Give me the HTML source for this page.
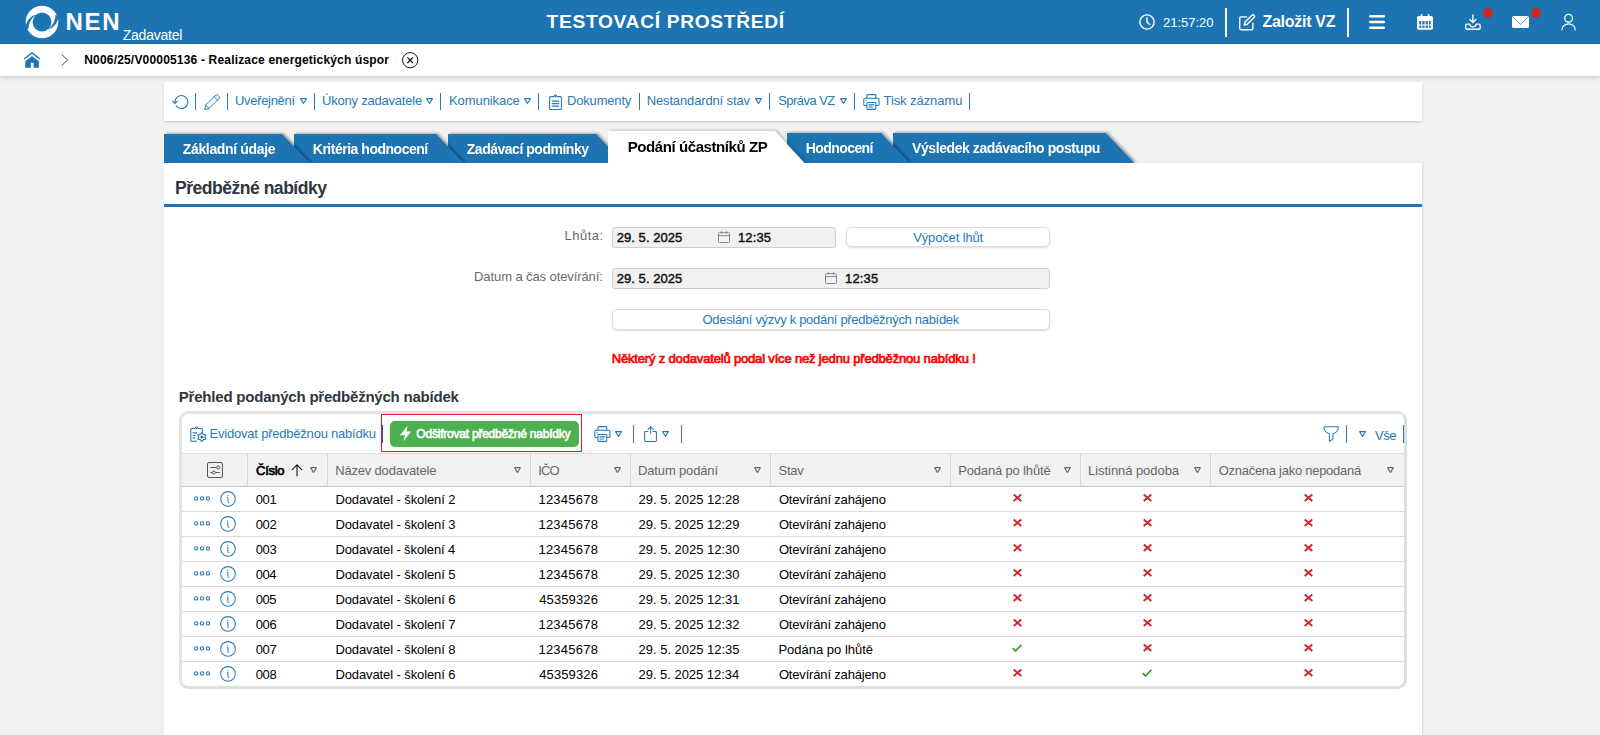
<!DOCTYPE html>
<html lang="cs">
<head>
<meta charset="utf-8">
<title>NEN - Zadavatel - Předběžné nabídky</title>
<style>
*{box-sizing:border-box;margin:0;padding:0}
html,body{width:1600px;height:735px;overflow:hidden}
body{position:relative;background:#f1f1f1;font-family:"Liberation Sans",sans-serif;font-size:13px;color:#000;line-height:1}
.t{position:absolute;white-space:nowrap;line-height:1}
svg{position:absolute;overflow:visible}

/* top bar */
#top{position:absolute;left:0;top:0;width:1600px;height:44px;background:#1c74b3;color:#fff}
#top .vsep{position:absolute;top:8px;width:2px;height:29px;background:#fff}
#top .dot{position:absolute;width:10px;height:10px;border-radius:50%;background:#c8282c}

/* breadcrumb */
#crumbs{position:absolute;left:0;top:44px;width:1600px;height:32px;background:#fff;box-shadow:0 1px 5px rgba(0,0,0,.20)}

/* main toolbar */
#toolbar{position:absolute;left:164px;top:82px;width:1258px;height:39px;background:#fff;box-shadow:0 1px 2px rgba(0,0,0,.16);color:#2779b8}
.sep{position:absolute;width:1px;background:#2779b8}
#toolbar .sep{top:11px;height:17px}

/* tabs */
#tabs{position:absolute;left:0;top:0;width:1600px;height:163px;overflow:hidden}
.tabw.on{filter:drop-shadow(2px -.5px 1.500px rgba(0,0,0,.18))}
.tabw{position:absolute;filter:drop-shadow(2px -1px 1.200px rgba(0,0,0,.30))}
.tab{position:absolute;left:0;top:0;width:100%;height:100%;background:#1c74b3;color:#fff;font-weight:bold}
.tab.on{background:#fff;color:#000}

/* panel */
#panel{position:absolute;left:164px;top:163px;width:1258px;height:572px;background:#fff;box-shadow:1px 0 2px rgba(0,0,0,.10)}
#panel h1,#panel h2{font-weight:bold;color:#2e3641}
.rule{position:absolute;left:0;top:41px;width:100%;height:3px;background:#1c74b3}
.lbl{color:#6a6a6a}
.inp{position:absolute;background:#f1f1f1;border:1px solid #cfcfcf;border-radius:3px}
.inp .t{font-weight:normal;color:#111;-webkit-text-stroke:.45px #111}
.btn{position:absolute;background:#fff;border:1px solid #dcdcdc;border-radius:5px;box-shadow:0 1px 2px rgba(0,0,0,.14);color:#2779b8}
.warn{color:#f00;font-weight:normal;-webkit-text-stroke:.7px #f00}

/* grid */
#grid{position:absolute;left:15px;top:248px;width:1228px;height:278px;border:3px solid #dcdfe0;border-top-color:#e2e4e5;border-left-color:#e2e4e5;border-radius:9px;background:#fff;overflow:hidden}
#gtool{position:absolute;left:0;top:0;width:1222px;height:39px;color:#2779b8}
#gtool .sep{top:11px;height:18px}
#redbox{position:absolute;left:199px;top:0;width:201px;height:38px;border:1px solid #e81a22}
#gbtn{position:absolute;left:208px;top:7px;width:189px;height:26px;border-radius:5px;background:#4caf50;color:#fff;-webkit-text-stroke:.62px #fff}
#ghead{position:absolute;left:0;top:39px;width:1222px;height:33.5px;background:#f1f1f1;border-top:1px solid #dcdcdc;border-bottom:1px solid #c9c9c9;color:#666}
#ghead .cs{position:absolute;top:0;width:1px;height:32px;background:#d6d6d6}
.row{position:absolute;left:0;width:1222px;height:25px;border-bottom:1px solid #dcdcdc}

</style>
</head>
<body>

<!-- ================= TOP BAR ================= -->
<header id="top">
  <svg style="left:25px;top:5px" width="34" height="34" viewBox="-17 -17 34 34">
    <circle cx="0" cy="0" r="16.3" fill="#fff"/>
    <circle cx="0" cy="0" r="9.4" fill="#1c74b3"/>
    <path d="M-16.6,5.6 C-15.5,-1.5 -11.5,-5.5 -6.3,-7.4 C-10.6,-3.6 -13.2,0.6 -13.6,7.2 Z" fill="#1c74b3"/>
    <path d="M16.6,-5.6 C15.5,1.5 11.5,5.5 6.3,7.4 C10.6,3.6 13.2,-0.6 13.6,-7.2 Z" fill="#1c74b3"/>
  </svg>
  <span class="t" id="nen" style="top:9.68px;font-size:24px;left:65.5px;letter-spacing:1.664px;font-weight:bold;">NEN</span>
  <span class="t" id="zad" style="top:27.95px;font-size:14px;left:122.75px;letter-spacing:-0.235px;">Zadavatel</span>
  <span class="t" id="env" style="top:12.45px;font-size:19.2px;left:546.6px;letter-spacing:0.672px;font-weight:bold;">TESTOVACÍ PROSTŘEDÍ</span>
  <svg style="left:1139px;top:14px" width="16" height="16" viewBox="0 0 16 16" fill="none" stroke="#fff" stroke-width="1.4" stroke-linecap="round">
    <circle cx="8" cy="8" r="7.1"/><path d="M8 3.8V8l2.6 2.6"/>
  </svg>
  <span class="t" id="clk" style="top:16.0px;font-size:13px;left:1163.0px;letter-spacing:-0.016px;">21:57:20</span>
  <div class="vsep" style="left:1225px"></div>
  <svg style="left:1239px;top:14px" width="17" height="16.500" viewBox="0 0 17 16.500" fill="none" stroke="#fff" stroke-width="1.400" stroke-linejoin="round" stroke-linecap="round">
    <path d="M7.600 2.900H2.100a1.400 1.400 0 0 0-1.400 1.400v10a1.400 1.400 0 0 0 1.400 1.400h10.400a1.400 1.400 0 0 0 1.400-1.400V9.200"/>
    <path d="M12.900 1.200a1.550 1.550 0 0 1 2.200 2.200L8.200 10.300l-2.900.7.700-2.900z"/>
  </svg>
  <span class="t" id="zal" style="top:14.46px;font-size:16px;left:1262.5px;letter-spacing:-0.285px;font-weight:bold;">Založit VZ</span>
  <div class="vsep" style="left:1347px"></div>
  <svg style="left:1369px;top:14px" width="16" height="16" viewBox="0 0 16 16" fill="none" stroke="#fff" stroke-width="2.4" stroke-linecap="round">
    <path d="M1.2 2.2h13.6M1.2 8h13.6M1.2 13.8h13.6"/>
  </svg>
  <svg style="left:1416.800px;top:14.200px" width="16" height="16" viewBox="0 0 16 16">
    <rect x="3.700" y="0" width="1.700" height="3.500" rx=".5" fill="#fff"/><rect x="10.700" y="0" width="1.700" height="3.500" rx=".5" fill="#fff"/>
    <rect x="0" y="1.900" width="16" height="13.800" rx="1.600" fill="#fff"/>
    <g fill="#1c74b3">
      <rect x="2.300" y="7" width="2" height="3.500"/><rect x="5.400" y="7" width="2.200" height="3.500"/><rect x="8.700" y="7" width="2.200" height="3.500"/><rect x="12" y="7" width="1.800" height="3.500"/>
      <rect x="2.300" y="11.600" width="2" height="2.300"/><rect x="5.400" y="11.600" width="2.200" height="2.300"/><rect x="8.700" y="11.600" width="2.200" height="2.300"/><rect x="12" y="11.600" width="1.800" height="2.300"/>
    </g>
  </svg>
  <svg style="left:1465px;top:13px" width="16" height="17" viewBox="0 0 16 17" fill="none" stroke="#fff" stroke-width="1.350" stroke-linecap="round" stroke-linejoin="round">
    <path d="M7.900 1.800v7.400M4.900 6.500l3 3 3-3"/>
    <path d="M1.700 11.100h2.900c.5 1.900 1.800 2.700 3.300 2.700s2.800-.8 3.300-2.700h2.900a1 1 0 0 1 1 1v3.100a1 1 0 0 1-1 1H1.700a1 1 0 0 1-1-1v-3.100a1 1 0 0 1 1-1z"/>
  </svg>
  <div class="dot" style="left:1483px;top:8px"></div>
  <svg style="left:1512px;top:16px" width="17" height="12" viewBox="0 0 17 12">
    <rect x="0" y="0" width="17" height="12" rx="1.500" fill="#fff"/>
    <path d="M.8 .8L8.500 8.400 16.200 .8" fill="none" stroke="#1c74b3" stroke-width=".75"/>
  </svg>
  <div class="dot" style="left:1531px;top:8px"></div>
  <svg style="left:1561px;top:13px" width="16" height="18" viewBox="0 0 16 18" fill="none" stroke="#fff" stroke-width="1.300" stroke-linecap="butt">
    <circle cx="7.600" cy="5.200" r="3.850"/><path d="M.9 17.200v-.2a6.700 6.200 0 0 1 13.400 0v.2"/>
  </svg>
</header>

<!-- ================= BREADCRUMB ================= -->
<nav id="crumbs">
  <svg style="left:24px;top:8px" width="16" height="16" viewBox="0 0 16 16">
    <path d="M.8 6.500L8 .9l7.200 5.600" stroke="#1f76b6" stroke-width="1.500" fill="none" stroke-linecap="round" stroke-linejoin="miter"/>
    <path d="M1.250 9.300L8 3.900l6.900 5.400v6.500H9.600v-5H6.900v5H1.250z" fill="#1f76b6"/>
  </svg>
  <svg style="left:61px;top:10px" width="8" height="12" viewBox="0 0 8 12" fill="none" stroke="#3d4f66" stroke-width="1"><path d="M.7 .5l6 5.500-6 5.500"/></svg>
  <span class="t" id="bc" style="top:9.64px;font-size:12px;left:84.25px;letter-spacing:0.179px;font-weight:bold;">N006/25/V00005136 - Realizace energetických úspor</span>
  <svg style="left:401.800px;top:7.800px" width="16.400" height="16.400" viewBox="0 0 16.400 16.400" fill="none" stroke="#111" stroke-width="1" stroke-linecap="butt">
    <circle cx="8.200" cy="8.200" r="7.650"/><path d="M5.400 5.400l5.600 5.600M11 5.400l-5.600 5.600" stroke-width="1.250"/>
  </svg>
</nav>


<!-- ================= MAIN TOOLBAR ================= -->
<div id="toolbar">
  <svg style="left:8px;top:12px" width="17" height="16" viewBox="0 0 17 16" fill="none" stroke="#2779b8" stroke-width="1.050" stroke-linecap="round" stroke-linejoin="round">
    <path d="M3.050 9.100A6.500 6.500 0 1 1 4.100 11.700"/><path d="M.7 7.100l2.350 2.300 2.300-2.200"/>
  </svg>
  <div class="sep" style="left:31px"></div>
  <svg style="left:40px;top:11.600px" width="16.200" height="16.200" viewBox="0 0 17 17" fill="none" stroke="#2779b8" stroke-width="1.05" stroke-linecap="round" stroke-linejoin="round">
    <path d="M12 1.4a1.9 1.9 0 0 1 2.7 0l.9.9a1.9 1.9 0 0 1 0 2.7L5.4 15.2l-4.6 1 1-4.6z"/><path d="M10.6 2.8l3.6 3.6M1.8 11.6l3.6 3.6"/>
  </svg>
  <div class="sep" style="left:63px"></div>
  <span class="t" id="tb1" style="top:12.0px;font-size:13px;left:71.0px;letter-spacing:-0.319px;">Uveřejnění</span><svg style="left:135.5px;top:16px" width="7" height="6.2" viewBox="0 0 7 6.2" fill="none" stroke="#2779b8" stroke-width="1.1" stroke-linejoin="round"><path d="M.6 .6h5.8L3.5 5.5z"/></svg>
  <div class="sep" style="left:150px"></div>
  <span class="t" id="tb2" style="top:12.0px;font-size:13px;left:158.0px;letter-spacing:-0.213px;">Úkony zadavatele</span><svg style="left:262px;top:16px" width="7" height="6.2" viewBox="0 0 7 6.2" fill="none" stroke="#2779b8" stroke-width="1.1" stroke-linejoin="round"><path d="M.6 .6h5.8L3.5 5.5z"/></svg>
  <div class="sep" style="left:276px"></div>
  <span class="t" id="tb3" style="top:12.0px;font-size:13px;left:285.0px;letter-spacing:-0.077px;">Komunikace</span><svg style="left:360.3px;top:16px" width="7" height="6.2" viewBox="0 0 7 6.2" fill="none" stroke="#2779b8" stroke-width="1.1" stroke-linejoin="round"><path d="M.6 .6h5.8L3.5 5.5z"/></svg>
  <div class="sep" style="left:374px"></div>
  <svg style="left:385px;top:12px" width="13" height="16" viewBox="0 0 13 16" fill="none" stroke="#2779b8" stroke-width="1.05" stroke-linejoin="round" stroke-linecap="round">
    <path d="M3.800 2.600H1.600a1 1 0 0 0-1 1v10.800a1 1 0 0 0 1 1h9.800a1 1 0 0 0 1-1V3.600a1 1 0 0 0-1-1H9.200"/>
    <path d="M3.800 2.600h1.100Q6.500 -.9 8.100 2.600h1.100"/>
    <circle cx="6.500" cy="2.600" r=".35" fill="#2779b8"/>
    <path d="M3.300 7.200h6.400M3.300 9.700h6.400M3.300 12.200h6.400" stroke-width="1.2"/>
  </svg>
  <span class="t" id="tb4" style="top:12.0px;font-size:13px;left:403.0px;letter-spacing:-0.176px;">Dokumenty</span>
  <div class="sep" style="left:475px"></div>
  <span class="t" id="tb5" style="top:12.0px;font-size:13px;left:482.7px;letter-spacing:-0.138px;">Nestandardní stav</span><svg style="left:590.8px;top:16px" width="7" height="6.2" viewBox="0 0 7 6.2" fill="none" stroke="#2779b8" stroke-width="1.1" stroke-linejoin="round"><path d="M.6 .6h5.8L3.5 5.5z"/></svg>
  <div class="sep" style="left:605px"></div>
  <span class="t" id="tb6" style="top:12.0px;font-size:13px;left:614.25px;letter-spacing:-0.552px;">Správa VZ</span><svg style="left:675.8px;top:16px" width="7" height="6.2" viewBox="0 0 7 6.2" fill="none" stroke="#2779b8" stroke-width="1.1" stroke-linejoin="round"><path d="M.6 .6h5.8L3.5 5.5z"/></svg>
  <div class="sep" style="left:690px"></div>
  <svg style="left:699.3px;top:12px" width="16.800" height="16" viewBox="0 0 16.800 16" fill="none" stroke="#2779b8" stroke-width="1.050" stroke-linejoin="round" stroke-linecap="round">
    <path d="M3.900 4.300V1.300a.7.700 0 0 1 .7-.7h7.500a.7.700 0 0 1 .7.700v3"/>
    <path d="M3.900 11.600H2a1.200 1.200 0 0 1-1.200-1.200V5.600A1.300 1.300 0 0 1 2.100 4.300h12.600a1.300 1.300 0 0 1 1.300 1.300v4.800a1.200 1.200 0 0 1-1.200 1.200h-1.900"/>
    <rect x="3.900" y="8.600" width="8.900" height="6.800" rx=".6" fill="#fff"/>
    <path d="M5.900 10.900h5M5.900 13h3.400M2.900 6.600h.3" stroke-width="1.050"/>
  </svg>
  <span class="t" id="tb7" style="top:12.0px;font-size:13px;left:719.5px;letter-spacing:-0.075px;">Tisk záznamu</span>
  <div class="sep" style="left:805px"></div>
</div>


<!-- ================= TABS ================= -->
<div id="tabs">
  <div class="tabw" style="left:164px;top:134px;width:146.0px;height:29px;z-index:6"><div class="tab" style="clip-path:polygon(0 0,118.0px 0,146.0px 29px,0 29px)"><span class="t" id="tab1" style="left:18.75px;top:8.05px;font-size:14px;letter-spacing:-0.346px;">Základní údaje</span></div></div>
  <div class="tabw" style="left:294px;top:134px;width:170.0px;height:29px;z-index:5"><div class="tab" style="clip-path:polygon(0 0,142.0px 0,170.0px 29px,0 29px)"><span class="t" id="tab2" style="left:18.75px;top:8.05px;font-size:14px;letter-spacing:-0.482px;">Kritéria hodnocení</span></div></div>
  <div class="tabw" style="left:448px;top:134px;width:176.0px;height:29px;z-index:4"><div class="tab" style="clip-path:polygon(0 0,148.0px 0,176.0px 29px,0 29px)"><span class="t" id="tab3" style="left:18.75px;top:8.05px;font-size:14px;letter-spacing:-0.481px;">Zadávací podmínky</span></div></div>
  <div class="tabw on" style="left:608px;top:131px;width:196.5px;height:32px;z-index:10"><div class="tab on" style="clip-path:polygon(0 0,167.0px 0,196.5px 32px,0 32px)"><span class="t" id="tab4" style="left:19.75px;top:8.2px;font-size:15px;letter-spacing:-0.418px;">Podání účastníků ZP</span></div></div>
  <div class="tabw" style="left:787px;top:133px;width:122.9px;height:30px;z-index:3"><div class="tab" style="clip-path:polygon(0 0,94.0px 0,122.9px 30px,0 30px)"><span class="t" id="tab5" style="left:18.75px;top:7.95px;font-size:14px;letter-spacing:-0.574px;">Hodnocení</span></div></div>
  <div class="tabw" style="left:893px;top:133px;width:241.49999999999991px;height:30px;z-index:2"><div class="tab" style="clip-path:polygon(0 0,212.5999999999999px 0,241.49999999999991px 30px,0 30px)"><span class="t" id="tab6" style="left:19.0px;top:7.95px;font-size:14px;letter-spacing:-0.416px;">Výsledek zadávacího postupu</span></div></div>
</div>

<section id="panel">

  <h1><span class="t" id="h1" style="top:17.3px;font-size:17.6px;left:11.0px;letter-spacing:-0.522px;">Předběžné nabídky</span></h1>
  <div class="rule"></div>

  <span class="t lbl" id="l1" style="top:66.0px;font-size:13px;right:818.25px;letter-spacing:0.519px;">Lhůta:</span>
  <div class="inp" style="left:448px;top:64px;width:224px;height:21px">
    <span class="t" id="d1" style="top:3.0px;font-size:13px;left:3.75px;letter-spacing:0.044px;">29. 5. 2025</span>
    <svg style="left:105px;top:2.8px" width="12" height="12" viewBox="0 0 12 12" fill="none" stroke="#8a8a8a" stroke-width="1"><rect x=".5" y="1.600" width="11" height="9.900" rx="1"/><path d="M.5 4.600h11M3.300 .2v2.600M8.700 .2v2.600"/></svg>
    <span class="t" id="c1" style="top:3.0px;font-size:13px;left:125.0px;letter-spacing:0.113px;">12:35</span>
  </div>
  <div class="btn" style="left:682px;top:64px;width:204px;height:20px">
    <span class="t" id="b1" style="top:3.0px;font-size:13px;left:66.2px;letter-spacing:-0.141px;">Výpočet lhůt</span>
  </div>

  <span class="t lbl" id="l2" style="top:107.0px;font-size:13px;right:819.25px;letter-spacing:-0.096px;">Datum a čas otevírání:</span>
  <div class="inp" style="left:448px;top:105px;width:438px;height:21px">
    <span class="t" id="d2" style="top:3.0px;font-size:13px;left:3.75px;letter-spacing:0.044px;">29. 5. 2025</span>
    <svg style="left:212px;top:2.8px" width="12" height="12" viewBox="0 0 12 12" fill="none" stroke="#8a8a8a" stroke-width="1"><rect x=".5" y="1.600" width="11" height="9.900" rx="1"/><path d="M.5 4.600h11M3.300 .2v2.600M8.700 .2v2.600"/></svg>
    <span class="t" id="c2" style="top:3.0px;font-size:13px;left:232.0px;letter-spacing:0.176px;">12:35</span>
  </div>

  <div class="btn" style="left:448px;top:146px;width:438px;height:20.500px">
    <span class="t" id="b2" style="top:3.3px;font-size:13px;left:89.5px;letter-spacing:-0.305px;">Odeslání výzvy k podání předběžných nabídek</span>
  </div>

  <span class="t warn" id="w1" style="top:189.3px;font-size:13px;left:447.75px;letter-spacing:-0.17px;">Některý z dodavatelů podal více než jednu předběžnou nabídku !</span>

  <h2><span class="t" id="h2" style="top:226.3px;font-size:15px;left:14.8px;letter-spacing:-0.212px;">Přehled podaných předběžných nabídek</span></h2>


  <div id="grid">
    <div id="gtool">
      <svg style="left:8px;top:12px" width="17" height="16" viewBox="0 0 17 16" fill="none" stroke="#2779b8" stroke-width="1.050" stroke-linecap="round" stroke-linejoin="round">
        <path d="M6.600 15.300H1.800a1 1 0 0 1-1-1V3.500a1 1 0 0 1 1-1h2.200M8.900 2.500h2.400a1 1 0 0 1 1 1v2.600"/>
        <path d="M4 2.500h.9Q6.500 -.9 8.100 2.500h.9"/>
        <circle cx="6.500" cy="2.500" r=".35" fill="#2779b8"/>
        <path d="M3.100 6.900h3.400M3.100 9.500h2.200M3.100 11.900h1.700" stroke-width="1.150"/>
        <path d="M11.85 6.45 L13.38 8.36 L15.79 8.73 L14.90 11.00 L15.79 13.27 L13.38 13.64 L11.85 15.55 L10.33 13.64 L7.91 13.27 L8.80 11.00 L7.91 8.72 L10.32 8.36z"/>
        <circle cx="11.85" cy="11.0" r="1.150" fill="#2779b8" stroke-width=".8"/>
      </svg>
      <span class="t" id="g1" style="top:13.0px;font-size:13px;left:27.6px;letter-spacing:-0.214px;">Evidovat předběžnou nabídku</span>
      <div class="sep" style="left:200px;background:#1d62a6"></div>
      <div id="redbox"></div>
      <div id="gbtn">
        <svg style="left:9.500px;top:5.400px" width="11.400" height="15" viewBox="0 0 11.400 15" fill="#fff"><path d="M7.500 0L0 9.200h5.100L3.700 15 11.200 5.400H6.500z"/></svg>
        <span class="t" id="g2" style="top:6.84px;font-size:12px;left:26.35px;letter-spacing:-0.221px;">Odšifrovat předběžné nabídky</span>
      </div>
      <svg style="left:412px;top:11.800px" width="16.800" height="16" viewBox="0 0 16.800 16" fill="none" stroke="#2779b8" stroke-width="1.050" stroke-linejoin="round" stroke-linecap="round">
    <path d="M3.900 4.300V1.300a.7.700 0 0 1 .7-.7h7.500a.7.700 0 0 1 .7.700v3"/>
    <path d="M3.900 11.600H2a1.200 1.200 0 0 1-1.200-1.200V5.600A1.300 1.300 0 0 1 2.100 4.300h12.600a1.300 1.300 0 0 1 1.300 1.300v4.800a1.200 1.200 0 0 1-1.200 1.200h-1.900"/>
    <rect x="3.900" y="8.600" width="8.900" height="6.800" rx=".6" fill="#fff"/>
    <path d="M5.900 10.900h5M5.900 13h3.400M2.900 6.600h.3" stroke-width="1.050"/>
  </svg>
      <svg style="left:433px;top:16.8px" width="7" height="6.2" viewBox="0 0 7 6.2" fill="none" stroke="#2779b8" stroke-width="1.1" stroke-linejoin="round"><path d="M.6 .6h5.8L3.5 5.5z"/></svg>
      <div class="sep" style="left:451px"></div>
      <svg style="left:462px;top:12.400px" width="13" height="16" viewBox="0 0 13 16" fill="none" stroke="#2779b8" stroke-width="1.050" stroke-linejoin="round" stroke-linecap="round">
        <path d="M4 5.400H1.400a.8.8 0 0 0-.8.8v8.400a.8.8 0 0 0 .8.8h10.200a.8.8 0 0 0 .8-.8V6.200a.8.8 0 0 0-.8-.8H9"/>
        <path d="M6.700 7.700V.8M4 3.400L6.700 .7l2.700 2.700"/>
      </svg>
      <svg style="left:480.4px;top:16.8px" width="7" height="6.2" viewBox="0 0 7 6.2" fill="none" stroke="#2779b8" stroke-width="1.1" stroke-linejoin="round"><path d="M.6 .6h5.8L3.5 5.5z"/></svg>
      <div class="sep" style="left:499px"></div>
      <svg style="left:1140.75px;top:12px" width="16.500" height="16" viewBox="0 0 16.500 16" fill="none" stroke="#2779b8" stroke-width="1.050" stroke-linejoin="round">
        <path d="M1.400 .8H14.900Q15.500 .8 15.400 1.500C15 4.600 12.700 7 9.900 7.800V13.100L6.400 15.300V7.800C3.600 7 1.300 4.600 .9 1.500Q.8 .8 1.400 .8z"/>
      </svg>
      <div class="sep" style="left:1164px"></div>
      <svg style="left:1177.2px;top:17.2px" width="7" height="6.2" viewBox="0 0 7 6.2" fill="none" stroke="#2779b8" stroke-width="1.1" stroke-linejoin="round"><path d="M.6 .6h5.8L3.5 5.5z"/></svg>
      <span class="t" id="g3" style="top:14.6px;font-size:13px;left:1193.0px;letter-spacing:-0.453px;">Vše</span>
      <div class="sep" style="left:1221px"></div>
    </div>
    <div id="ghead">
      <svg style="left:25px;top:8px" width="16" height="16" viewBox="0 0 16 16" fill="none" stroke="#555" stroke-width="1">
        <rect x=".5" y=".5" width="15" height="15" rx="1.500"/>
        <path d="M3.300 5.500h6.400M3.300 10.500h1.800M8.600 10.500h4.200"/>
        <circle cx="11.200" cy="5.500" r="1.500" fill="#f1f1f1"/><circle cx="6.800" cy="10.500" r="1.500" fill="#f1f1f1"/>
      </svg>
      <span class="t" id="hc1" style="top:9.8px;font-size:13px;left:74.05px;letter-spacing:-0.305px;color:#000;-webkit-text-stroke:.68px #000;">Číslo</span>
      <svg style="left:109px;top:10.300000000000011px" width="12" height="12.400" viewBox="0 0 12 12.400" fill="none" stroke="#222" stroke-width="1.150"><path d="M6 12.200V1M.8 6.200L6 .9l5.200 5.300"/></svg>
      <svg style="left:128.2px;top:12.699999999999989px" width="7" height="6.2" viewBox="0 0 7 6.2" fill="none" stroke="#686868" stroke-width="1.1" stroke-linejoin="round"><path d="M.6 .6h5.8L3.5 5.5z"/></svg>
      <span class="t" id="hc2" style="top:9.8px;font-size:13px;left:153.25px;letter-spacing:-0.189px;">Název dodavatele</span><svg style="left:331.8px;top:12.699999999999989px" width="7" height="6.2" viewBox="0 0 7 6.2" fill="none" stroke="#686868" stroke-width="1.1" stroke-linejoin="round"><path d="M.6 .6h5.8L3.5 5.5z"/></svg>
      <span class="t" id="hc3" style="top:9.8px;font-size:13px;left:356.25px;letter-spacing:-0.937px;">IČO</span><svg style="left:431.8px;top:12.699999999999989px" width="7" height="6.2" viewBox="0 0 7 6.2" fill="none" stroke="#686868" stroke-width="1.1" stroke-linejoin="round"><path d="M.6 .6h5.8L3.5 5.5z"/></svg>
      <span class="t" id="hc4" style="top:9.8px;font-size:13px;left:456.05px;letter-spacing:-0.155px;">Datum podání</span><svg style="left:571.7px;top:12.699999999999989px" width="7" height="6.2" viewBox="0 0 7 6.2" fill="none" stroke="#686868" stroke-width="1.1" stroke-linejoin="round"><path d="M.6 .6h5.8L3.5 5.5z"/></svg>
      <span class="t" id="hc5" style="top:9.8px;font-size:13px;left:596.55px;letter-spacing:-0.305px;">Stav</span><svg style="left:751.6px;top:12.699999999999989px" width="7" height="6.2" viewBox="0 0 7 6.2" fill="none" stroke="#686868" stroke-width="1.1" stroke-linejoin="round"><path d="M.6 .6h5.8L3.5 5.5z"/></svg>
      <span class="t" id="hc6" style="top:9.8px;font-size:13px;left:776.2px;letter-spacing:-0.157px;">Podaná po lhůtě</span><svg style="left:881.7px;top:12.699999999999989px" width="7" height="6.2" viewBox="0 0 7 6.2" fill="none" stroke="#686868" stroke-width="1.1" stroke-linejoin="round"><path d="M.6 .6h5.8L3.5 5.5z"/></svg>
      <span class="t" id="hc7" style="top:9.8px;font-size:13px;left:906.05px;letter-spacing:-0.058px;">Listinná podoba</span><svg style="left:1011.6px;top:12.699999999999989px" width="7" height="6.2" viewBox="0 0 7 6.2" fill="none" stroke="#686868" stroke-width="1.1" stroke-linejoin="round"><path d="M.6 .6h5.8L3.5 5.5z"/></svg>
      <span class="t" id="hc8" style="top:9.8px;font-size:13px;left:1036.7px;letter-spacing:-0.271px;">Označena jako nepodaná</span><svg style="left:1204.6px;top:12.699999999999989px" width="7" height="6.2" viewBox="0 0 7 6.2" fill="none" stroke="#686868" stroke-width="1.1" stroke-linejoin="round"><path d="M.6 .6h5.8L3.5 5.5z"/></svg>
      <div class="cs" style="left:65px"></div><div class="cs" style="left:145px"></div><div class="cs" style="left:348px"></div><div class="cs" style="left:448px"></div><div class="cs" style="left:588px"></div><div class="cs" style="left:768px"></div><div class="cs" style="left:898px"></div><div class="cs" style="left:1028px"></div>
    </div>
    <div class="row" style="top:73px"><svg style="left:12px;top:9.400px" width="16" height="5" viewBox="0 0 16 5" fill="none" stroke="#2779b8" stroke-width="1.100"><circle cx="2.200" cy="2.400" r="1.650"/><circle cx="8.050" cy="2.400" r="1.650"/><circle cx="13.900" cy="2.400" r="1.650"/></svg><svg style="left:38px;top:4px" width="16" height="16" viewBox="0 0 16 16" fill="none" stroke="#2779b8" stroke-width="1.050"><circle cx="8" cy="7.900" r="7.300"/><circle cx="7.800" cy="4.300" r=".62" fill="#2779b8" stroke="none"/><path d="M7.300 6.400h.6v4.300q0 .9 1 .9" stroke-linecap="round" stroke-linejoin="round" stroke-width="1"/></svg><span class="t" id="r1a" style="top:6.0px;font-size:13px;left:73.65px;letter-spacing:-0.277px;">001</span><span class="t" id="r1b" style="top:6.0px;font-size:13px;left:153.45px;letter-spacing:-0.105px;">Dodavatel - školení 2</span><span class="t" id="r1c" style="top:6.0px;font-size:13px;left:356.45px;letter-spacing:0.236px;">12345678</span><span class="t" id="r1d" style="top:6.0px;font-size:13px;left:456.55px;letter-spacing:-0.016px;">29. 5. 2025 12:28</span><span class="t" id="r1e" style="top:6.0px;font-size:13px;left:596.9px;letter-spacing:-0.168px;">Otevírání zahájeno</span><svg style="left:830.5px;top:7.4px" width="9" height="7.600" viewBox="0 0 9 7.600" stroke="#d0242b" stroke-width="1.900" fill="none"><path d="M.7 .6l7.600 6.400M8.300 .6L.7 7"/></svg><svg style="left:960.5px;top:7.4px" width="9" height="7.600" viewBox="0 0 9 7.600" stroke="#d0242b" stroke-width="1.900" fill="none"><path d="M.7 .6l7.600 6.400M8.300 .6L.7 7"/></svg><svg style="left:1122.3px;top:7.4px" width="9" height="7.600" viewBox="0 0 9 7.600" stroke="#d0242b" stroke-width="1.900" fill="none"><path d="M.7 .6l7.600 6.400M8.300 .6L.7 7"/></svg></div><div class="row" style="top:98px"><svg style="left:12px;top:9.400px" width="16" height="5" viewBox="0 0 16 5" fill="none" stroke="#2779b8" stroke-width="1.100"><circle cx="2.200" cy="2.400" r="1.650"/><circle cx="8.050" cy="2.400" r="1.650"/><circle cx="13.900" cy="2.400" r="1.650"/></svg><svg style="left:38px;top:4px" width="16" height="16" viewBox="0 0 16 16" fill="none" stroke="#2779b8" stroke-width="1.050"><circle cx="8" cy="7.900" r="7.300"/><circle cx="7.800" cy="4.300" r=".62" fill="#2779b8" stroke="none"/><path d="M7.300 6.400h.6v4.300q0 .9 1 .9" stroke-linecap="round" stroke-linejoin="round" stroke-width="1"/></svg><span class="t" id="r2a" style="top:6.0px;font-size:13px;left:73.65px;letter-spacing:-0.277px;">002</span><span class="t" id="r2b" style="top:6.0px;font-size:13px;left:153.45px;letter-spacing:-0.105px;">Dodavatel - školení 3</span><span class="t" id="r2c" style="top:6.0px;font-size:13px;left:356.45px;letter-spacing:0.236px;">12345678</span><span class="t" id="r2d" style="top:6.0px;font-size:13px;left:456.55px;letter-spacing:-0.016px;">29. 5. 2025 12:29</span><span class="t" id="r2e" style="top:6.0px;font-size:13px;left:596.9px;letter-spacing:-0.168px;">Otevírání zahájeno</span><svg style="left:830.5px;top:7.4px" width="9" height="7.600" viewBox="0 0 9 7.600" stroke="#d0242b" stroke-width="1.900" fill="none"><path d="M.7 .6l7.600 6.400M8.300 .6L.7 7"/></svg><svg style="left:960.5px;top:7.4px" width="9" height="7.600" viewBox="0 0 9 7.600" stroke="#d0242b" stroke-width="1.900" fill="none"><path d="M.7 .6l7.600 6.400M8.300 .6L.7 7"/></svg><svg style="left:1122.3px;top:7.4px" width="9" height="7.600" viewBox="0 0 9 7.600" stroke="#d0242b" stroke-width="1.900" fill="none"><path d="M.7 .6l7.600 6.400M8.300 .6L.7 7"/></svg></div><div class="row" style="top:123px"><svg style="left:12px;top:9.400px" width="16" height="5" viewBox="0 0 16 5" fill="none" stroke="#2779b8" stroke-width="1.100"><circle cx="2.200" cy="2.400" r="1.650"/><circle cx="8.050" cy="2.400" r="1.650"/><circle cx="13.900" cy="2.400" r="1.650"/></svg><svg style="left:38px;top:4px" width="16" height="16" viewBox="0 0 16 16" fill="none" stroke="#2779b8" stroke-width="1.050"><circle cx="8" cy="7.900" r="7.300"/><circle cx="7.800" cy="4.300" r=".62" fill="#2779b8" stroke="none"/><path d="M7.300 6.400h.6v4.300q0 .9 1 .9" stroke-linecap="round" stroke-linejoin="round" stroke-width="1"/></svg><span class="t" id="r3a" style="top:6.0px;font-size:13px;left:73.65px;letter-spacing:-0.277px;">003</span><span class="t" id="r3b" style="top:6.0px;font-size:13px;left:153.45px;letter-spacing:-0.117px;">Dodavatel - školení 4</span><span class="t" id="r3c" style="top:6.0px;font-size:13px;left:356.45px;letter-spacing:0.236px;">12345678</span><span class="t" id="r3d" style="top:6.0px;font-size:13px;left:456.55px;letter-spacing:-0.016px;">29. 5. 2025 12:30</span><span class="t" id="r3e" style="top:6.0px;font-size:13px;left:596.9px;letter-spacing:-0.168px;">Otevírání zahájeno</span><svg style="left:830.5px;top:7.4px" width="9" height="7.600" viewBox="0 0 9 7.600" stroke="#d0242b" stroke-width="1.900" fill="none"><path d="M.7 .6l7.600 6.400M8.300 .6L.7 7"/></svg><svg style="left:960.5px;top:7.4px" width="9" height="7.600" viewBox="0 0 9 7.600" stroke="#d0242b" stroke-width="1.900" fill="none"><path d="M.7 .6l7.600 6.400M8.300 .6L.7 7"/></svg><svg style="left:1122.3px;top:7.4px" width="9" height="7.600" viewBox="0 0 9 7.600" stroke="#d0242b" stroke-width="1.900" fill="none"><path d="M.7 .6l7.600 6.400M8.300 .6L.7 7"/></svg></div><div class="row" style="top:148px"><svg style="left:12px;top:9.400px" width="16" height="5" viewBox="0 0 16 5" fill="none" stroke="#2779b8" stroke-width="1.100"><circle cx="2.200" cy="2.400" r="1.650"/><circle cx="8.050" cy="2.400" r="1.650"/><circle cx="13.900" cy="2.400" r="1.650"/></svg><svg style="left:38px;top:4px" width="16" height="16" viewBox="0 0 16 16" fill="none" stroke="#2779b8" stroke-width="1.050"><circle cx="8" cy="7.900" r="7.300"/><circle cx="7.800" cy="4.300" r=".62" fill="#2779b8" stroke="none"/><path d="M7.300 6.400h.6v4.300q0 .9 1 .9" stroke-linecap="round" stroke-linejoin="round" stroke-width="1"/></svg><span class="t" id="r4a" style="top:6.0px;font-size:13px;left:73.65px;letter-spacing:-0.402px;">004</span><span class="t" id="r4b" style="top:6.0px;font-size:13px;left:153.45px;letter-spacing:-0.105px;">Dodavatel - školení 5</span><span class="t" id="r4c" style="top:6.0px;font-size:13px;left:356.45px;letter-spacing:0.236px;">12345678</span><span class="t" id="r4d" style="top:6.0px;font-size:13px;left:456.55px;letter-spacing:-0.016px;">29. 5. 2025 12:30</span><span class="t" id="r4e" style="top:6.0px;font-size:13px;left:596.9px;letter-spacing:-0.168px;">Otevírání zahájeno</span><svg style="left:830.5px;top:7.4px" width="9" height="7.600" viewBox="0 0 9 7.600" stroke="#d0242b" stroke-width="1.900" fill="none"><path d="M.7 .6l7.600 6.400M8.300 .6L.7 7"/></svg><svg style="left:960.5px;top:7.4px" width="9" height="7.600" viewBox="0 0 9 7.600" stroke="#d0242b" stroke-width="1.900" fill="none"><path d="M.7 .6l7.600 6.400M8.300 .6L.7 7"/></svg><svg style="left:1122.3px;top:7.4px" width="9" height="7.600" viewBox="0 0 9 7.600" stroke="#d0242b" stroke-width="1.900" fill="none"><path d="M.7 .6l7.600 6.400M8.300 .6L.7 7"/></svg></div><div class="row" style="top:173px"><svg style="left:12px;top:9.400px" width="16" height="5" viewBox="0 0 16 5" fill="none" stroke="#2779b8" stroke-width="1.100"><circle cx="2.200" cy="2.400" r="1.650"/><circle cx="8.050" cy="2.400" r="1.650"/><circle cx="13.900" cy="2.400" r="1.650"/></svg><svg style="left:38px;top:4px" width="16" height="16" viewBox="0 0 16 16" fill="none" stroke="#2779b8" stroke-width="1.050"><circle cx="8" cy="7.900" r="7.300"/><circle cx="7.800" cy="4.300" r=".62" fill="#2779b8" stroke="none"/><path d="M7.300 6.400h.6v4.300q0 .9 1 .9" stroke-linecap="round" stroke-linejoin="round" stroke-width="1"/></svg><span class="t" id="r5a" style="top:6.0px;font-size:13px;left:73.65px;letter-spacing:-0.402px;">005</span><span class="t" id="r5b" style="top:6.0px;font-size:13px;left:153.45px;letter-spacing:-0.105px;">Dodavatel - školení 6</span><span class="t" id="r5c" style="top:6.0px;font-size:13px;left:357.2px;letter-spacing:0.129px;">45359326</span><span class="t" id="r5d" style="top:6.0px;font-size:13px;left:456.55px;letter-spacing:-0.016px;">29. 5. 2025 12:31</span><span class="t" id="r5e" style="top:6.0px;font-size:13px;left:596.9px;letter-spacing:-0.168px;">Otevírání zahájeno</span><svg style="left:830.5px;top:7.4px" width="9" height="7.600" viewBox="0 0 9 7.600" stroke="#d0242b" stroke-width="1.900" fill="none"><path d="M.7 .6l7.600 6.400M8.300 .6L.7 7"/></svg><svg style="left:960.5px;top:7.4px" width="9" height="7.600" viewBox="0 0 9 7.600" stroke="#d0242b" stroke-width="1.900" fill="none"><path d="M.7 .6l7.600 6.400M8.300 .6L.7 7"/></svg><svg style="left:1122.3px;top:7.4px" width="9" height="7.600" viewBox="0 0 9 7.600" stroke="#d0242b" stroke-width="1.900" fill="none"><path d="M.7 .6l7.600 6.400M8.300 .6L.7 7"/></svg></div><div class="row" style="top:198px"><svg style="left:12px;top:9.400px" width="16" height="5" viewBox="0 0 16 5" fill="none" stroke="#2779b8" stroke-width="1.100"><circle cx="2.200" cy="2.400" r="1.650"/><circle cx="8.050" cy="2.400" r="1.650"/><circle cx="13.900" cy="2.400" r="1.650"/></svg><svg style="left:38px;top:4px" width="16" height="16" viewBox="0 0 16 16" fill="none" stroke="#2779b8" stroke-width="1.050"><circle cx="8" cy="7.900" r="7.300"/><circle cx="7.800" cy="4.300" r=".62" fill="#2779b8" stroke="none"/><path d="M7.300 6.400h.6v4.300q0 .9 1 .9" stroke-linecap="round" stroke-linejoin="round" stroke-width="1"/></svg><span class="t" id="r6a" style="top:6.0px;font-size:13px;left:73.65px;letter-spacing:-0.277px;">006</span><span class="t" id="r6b" style="top:6.0px;font-size:13px;left:153.45px;letter-spacing:-0.105px;">Dodavatel - školení 7</span><span class="t" id="r6c" style="top:6.0px;font-size:13px;left:356.45px;letter-spacing:0.236px;">12345678</span><span class="t" id="r6d" style="top:6.0px;font-size:13px;left:456.55px;letter-spacing:-0.016px;">29. 5. 2025 12:32</span><span class="t" id="r6e" style="top:6.0px;font-size:13px;left:596.9px;letter-spacing:-0.168px;">Otevírání zahájeno</span><svg style="left:830.5px;top:7.4px" width="9" height="7.600" viewBox="0 0 9 7.600" stroke="#d0242b" stroke-width="1.900" fill="none"><path d="M.7 .6l7.600 6.400M8.300 .6L.7 7"/></svg><svg style="left:960.5px;top:7.4px" width="9" height="7.600" viewBox="0 0 9 7.600" stroke="#d0242b" stroke-width="1.900" fill="none"><path d="M.7 .6l7.600 6.400M8.300 .6L.7 7"/></svg><svg style="left:1122.3px;top:7.4px" width="9" height="7.600" viewBox="0 0 9 7.600" stroke="#d0242b" stroke-width="1.900" fill="none"><path d="M.7 .6l7.600 6.400M8.300 .6L.7 7"/></svg></div><div class="row" style="top:223px"><svg style="left:12px;top:9.400px" width="16" height="5" viewBox="0 0 16 5" fill="none" stroke="#2779b8" stroke-width="1.100"><circle cx="2.200" cy="2.400" r="1.650"/><circle cx="8.050" cy="2.400" r="1.650"/><circle cx="13.900" cy="2.400" r="1.650"/></svg><svg style="left:38px;top:4px" width="16" height="16" viewBox="0 0 16 16" fill="none" stroke="#2779b8" stroke-width="1.050"><circle cx="8" cy="7.900" r="7.300"/><circle cx="7.800" cy="4.300" r=".62" fill="#2779b8" stroke="none"/><path d="M7.300 6.400h.6v4.300q0 .9 1 .9" stroke-linecap="round" stroke-linejoin="round" stroke-width="1"/></svg><span class="t" id="r7a" style="top:6.0px;font-size:13px;left:73.65px;letter-spacing:-0.277px;">007</span><span class="t" id="r7b" style="top:6.0px;font-size:13px;left:153.45px;letter-spacing:-0.105px;">Dodavatel - školení 8</span><span class="t" id="r7c" style="top:6.0px;font-size:13px;left:356.45px;letter-spacing:0.236px;">12345678</span><span class="t" id="r7d" style="top:6.0px;font-size:13px;left:456.55px;letter-spacing:-0.016px;">29. 5. 2025 12:35</span><span class="t" id="r7e" style="top:6.0px;font-size:13px;left:596.4px;letter-spacing:-0.0px;">Podána po lhůtě</span><svg style="left:829.5px;top:7px" width="10" height="8" viewBox="0 0 10 8" stroke="#2fa52f" stroke-width="1.800" fill="none"><path d="M.6 4.200l2.900 2.800L9.400 .8"/></svg><svg style="left:960.5px;top:7.4px" width="9" height="7.600" viewBox="0 0 9 7.600" stroke="#d0242b" stroke-width="1.900" fill="none"><path d="M.7 .6l7.600 6.400M8.300 .6L.7 7"/></svg><svg style="left:1122.3px;top:7.4px" width="9" height="7.600" viewBox="0 0 9 7.600" stroke="#d0242b" stroke-width="1.900" fill="none"><path d="M.7 .6l7.600 6.400M8.300 .6L.7 7"/></svg></div><div class="row" style="top:248px"><svg style="left:12px;top:9.400px" width="16" height="5" viewBox="0 0 16 5" fill="none" stroke="#2779b8" stroke-width="1.100"><circle cx="2.200" cy="2.400" r="1.650"/><circle cx="8.050" cy="2.400" r="1.650"/><circle cx="13.900" cy="2.400" r="1.650"/></svg><svg style="left:38px;top:4px" width="16" height="16" viewBox="0 0 16 16" fill="none" stroke="#2779b8" stroke-width="1.050"><circle cx="8" cy="7.900" r="7.300"/><circle cx="7.800" cy="4.300" r=".62" fill="#2779b8" stroke="none"/><path d="M7.300 6.400h.6v4.300q0 .9 1 .9" stroke-linecap="round" stroke-linejoin="round" stroke-width="1"/></svg><span class="t" id="r8a" style="top:6.0px;font-size:13px;left:73.65px;letter-spacing:-0.277px;">008</span><span class="t" id="r8b" style="top:6.0px;font-size:13px;left:153.45px;letter-spacing:-0.105px;">Dodavatel - školení 6</span><span class="t" id="r8c" style="top:6.0px;font-size:13px;left:357.2px;letter-spacing:0.129px;">45359326</span><span class="t" id="r8d" style="top:6.0px;font-size:13px;left:456.55px;letter-spacing:-0.032px;">29. 5. 2025 12:34</span><span class="t" id="r8e" style="top:6.0px;font-size:13px;left:596.9px;letter-spacing:-0.168px;">Otevírání zahájeno</span><svg style="left:830.5px;top:7.4px" width="9" height="7.600" viewBox="0 0 9 7.600" stroke="#d0242b" stroke-width="1.900" fill="none"><path d="M.7 .6l7.600 6.400M8.300 .6L.7 7"/></svg><svg style="left:959.5px;top:7px" width="10" height="8" viewBox="0 0 10 8" stroke="#2fa52f" stroke-width="1.800" fill="none"><path d="M.6 4.200l2.900 2.800L9.400 .8"/></svg><svg style="left:1122.3px;top:7.4px" width="9" height="7.600" viewBox="0 0 9 7.600" stroke="#d0242b" stroke-width="1.900" fill="none"><path d="M.7 .6l7.600 6.400M8.300 .6L.7 7"/></svg></div>
  </div>

</section>
</body>
</html>
